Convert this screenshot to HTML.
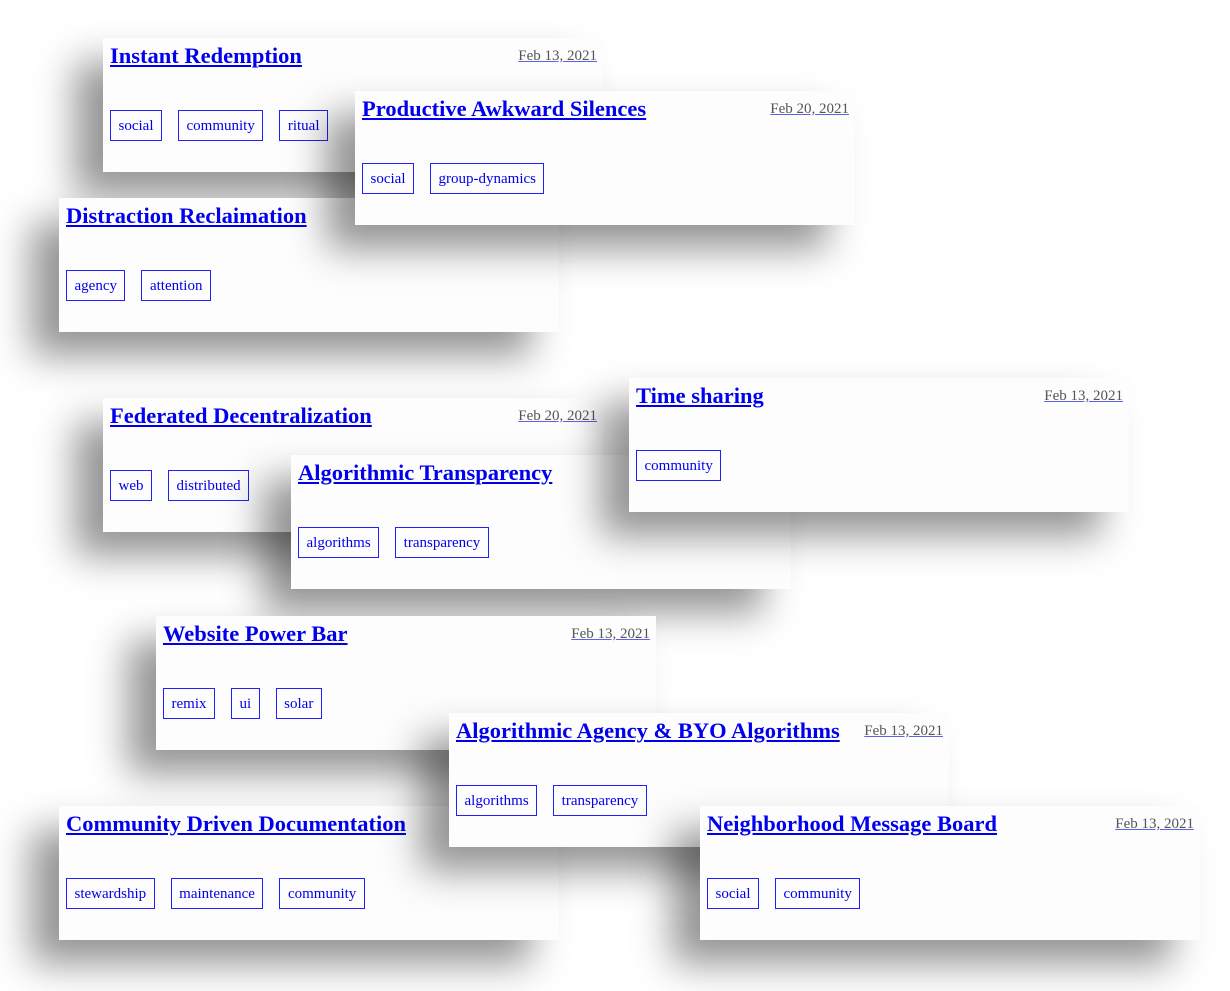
<!DOCTYPE html>
<html><head><style>
body{margin:0;width:1230px;height:991px;background:#fff;position:relative;overflow:hidden;font-family:"Liberation Serif",serif;}
.c{position:absolute;width:486px;height:120px;padding:7px;background:#fdfdfd;box-shadow:-28px 24px 36px rgba(0,0,0,0.42);}
.t{position:absolute;left:7px;top:5px;font-size:22.5px;font-weight:bold;color:#0000ee;text-decoration:underline;white-space:nowrap;line-height:26px}
.d{position:absolute;right:6px;top:10px;font-size:15px;color:#555;text-decoration:underline;text-decoration-color:#6060ee;}
.g{position:absolute;left:7px;top:72px;display:flex}
.g span{display:block;border:1px solid #2020ff;color:#0000ee;font-size:15px;height:29px;line-height:30px;padding:0 7.5px;margin-right:16px}
</style></head><body>
<div class="c" style="left:103px;top:38px"><div class="t">Instant Redemption</div><div class="d">Feb 13, 2021</div><div class="g"><span>social</span><span>community</span><span>ritual</span></div></div>
<div class="c" style="left:59px;top:198px"><div class="t">Distraction Reclaimation</div><div class="g"><span>agency</span><span>attention</span></div></div>
<div class="c" style="left:355px;top:91px"><div class="t">Productive Awkward Silences</div><div class="d">Feb 20, 2021</div><div class="g"><span>social</span><span>group-dynamics</span></div></div>
<div class="c" style="left:103px;top:398px"><div class="t">Federated Decentralization</div><div class="d">Feb 20, 2021</div><div class="g"><span>web</span><span>distributed</span></div></div>
<div class="c" style="left:291px;top:455px"><div class="t">Algorithmic Transparency</div><div class="g"><span>algorithms</span><span>transparency</span></div></div>
<div class="c" style="left:629px;top:378px"><div class="t">Time sharing</div><div class="d">Feb 13, 2021</div><div class="g"><span>community</span></div></div>
<div class="c" style="left:156px;top:616px"><div class="t">Website Power Bar</div><div class="d">Feb 13, 2021</div><div class="g"><span>remix</span><span>ui</span><span>solar</span></div></div>
<div class="c" style="left:59px;top:806px"><div class="t">Community Driven Documentation</div><div class="g"><span>stewardship</span><span>maintenance</span><span>community</span></div></div>
<div class="c" style="left:449px;top:713px"><div class="t">Algorithmic Agency &amp; BYO Algorithms</div><div class="d">Feb 13, 2021</div><div class="g"><span>algorithms</span><span>transparency</span></div></div>
<div class="c" style="left:700px;top:806px"><div class="t">Neighborhood Message Board</div><div class="d">Feb 13, 2021</div><div class="g"><span>social</span><span>community</span></div></div>
</body></html>
